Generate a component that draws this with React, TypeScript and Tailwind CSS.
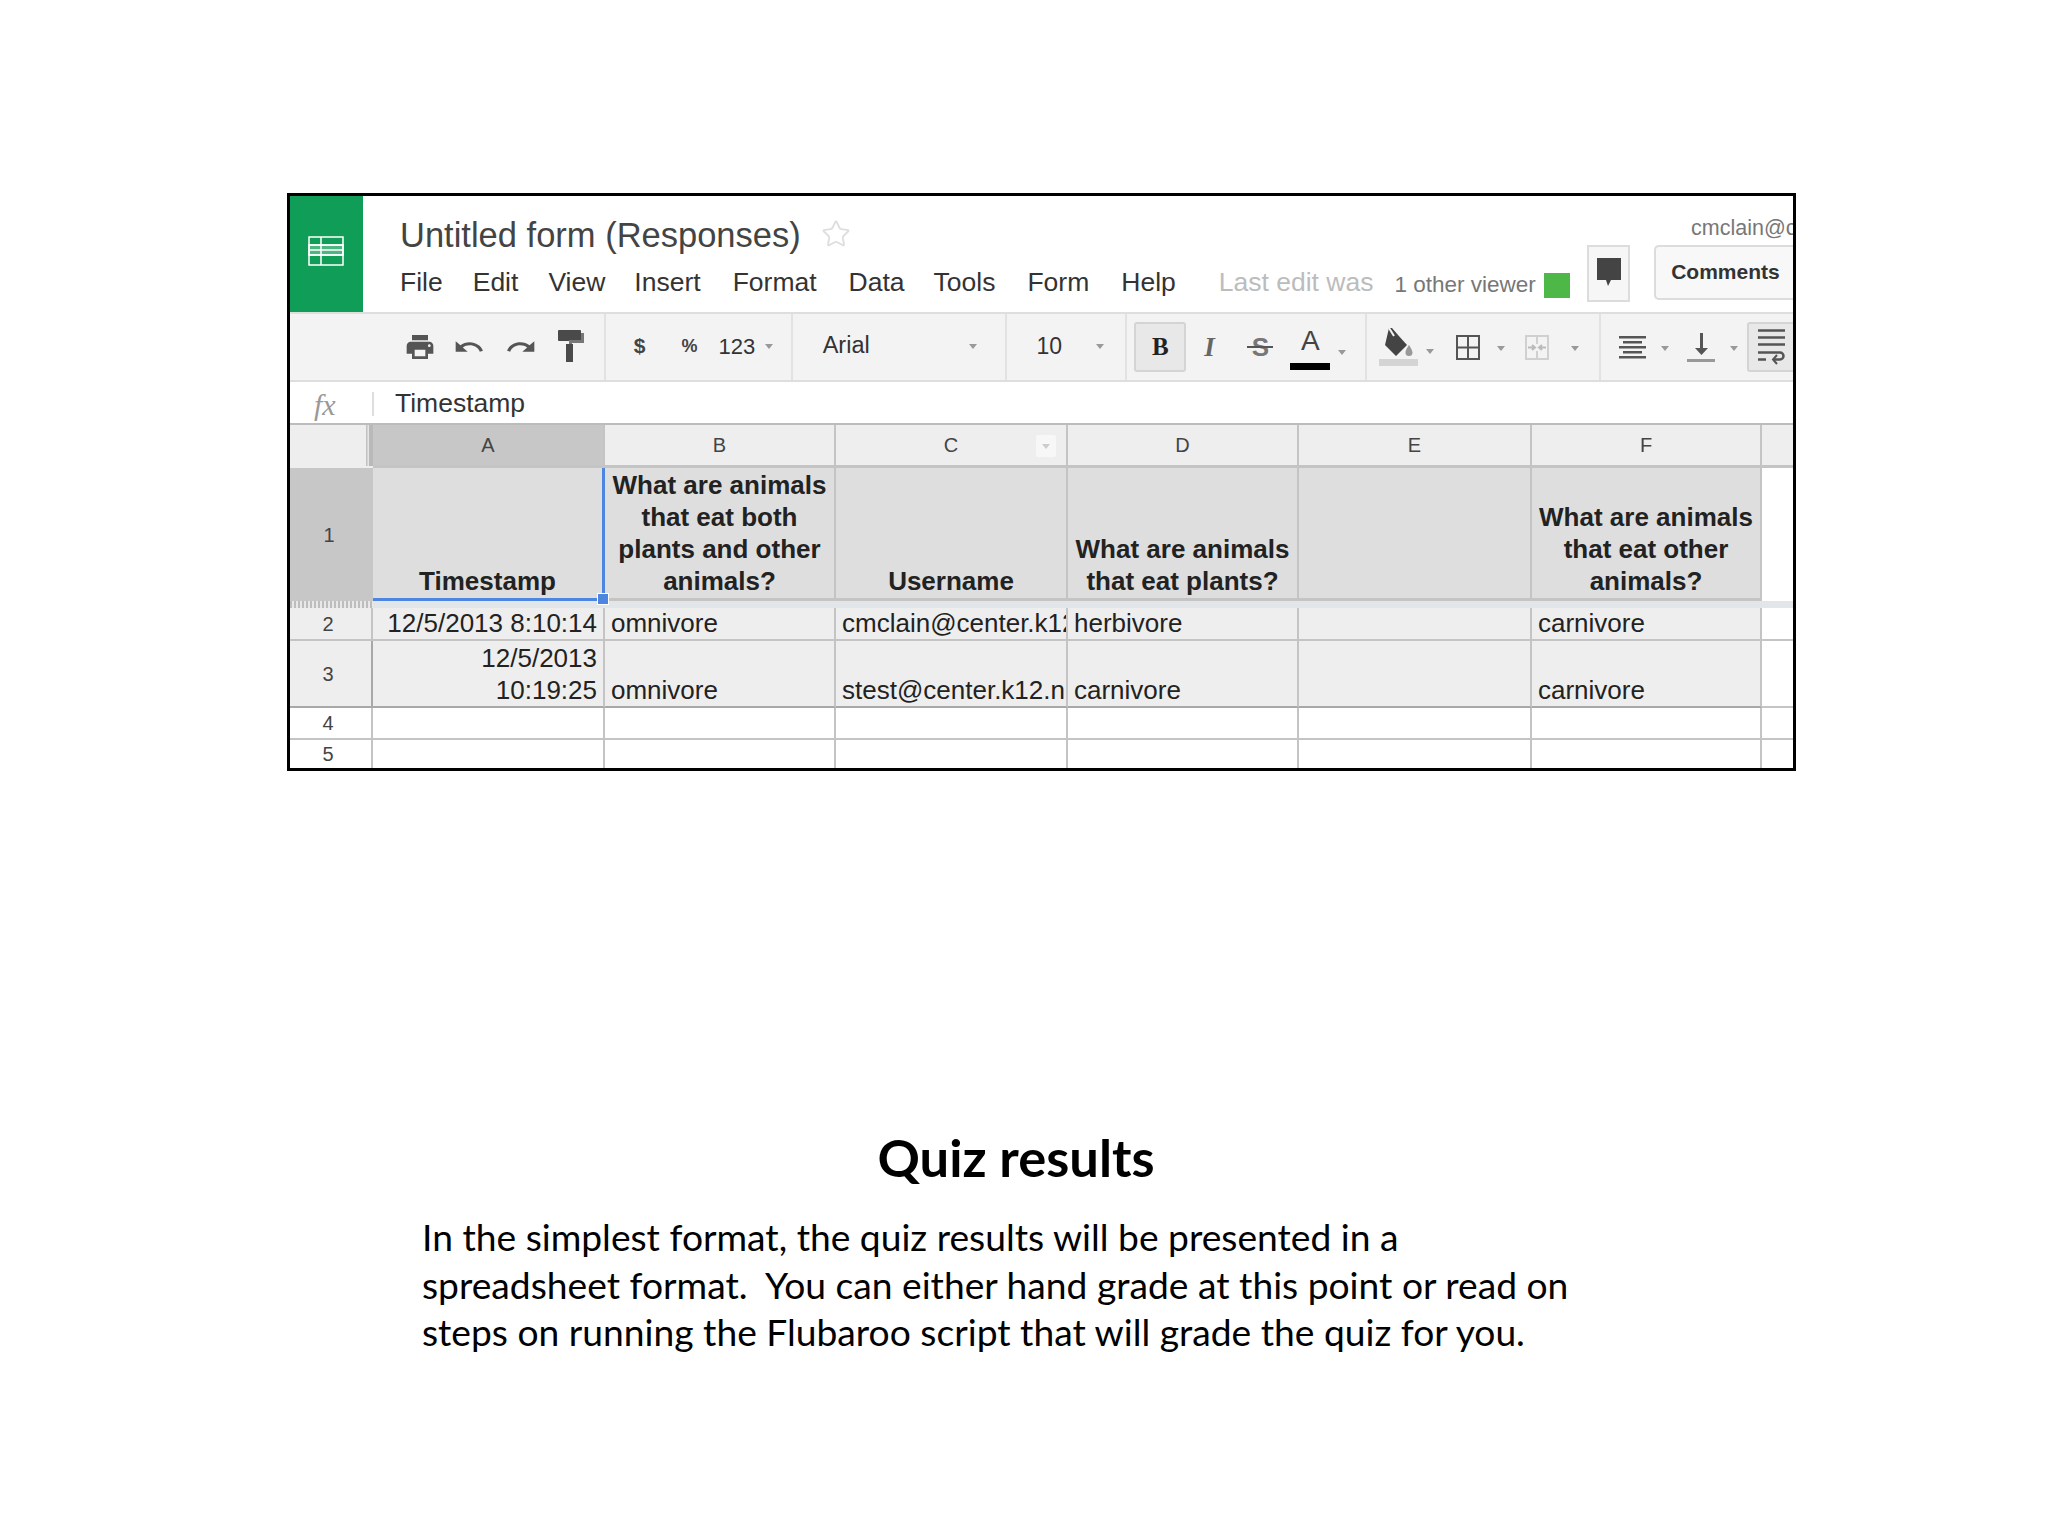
import React from "react"
import { Star } from "lucide-react"

const Caret = ({ className = "" }: { className?: string }) => (
  <span className={`inline-block w-0 h-0 border-x-[4px] border-x-transparent border-t-[5px] border-t-[#999] ${className}`} />
)

const Icon = ({ d, w, h, className = "" }: { d: string; w: number; h: number; className?: string }) => (
  <svg width={w} height={h} viewBox="0 0 24 24" preserveAspectRatio="none" className={className} fill="#555">
    <path d={d} />
  </svg>
)

const PaintRoller = () => (
  <svg width="28" height="32" viewBox="0 0 28 32" fill="#4a4a4a">
    <rect x="1" y="0" width="23" height="11" rx="1" />
    <path d="M24 3h3v10H15v3h-3v-6h12z" fill="#777" />
    <rect x="9" y="14" width="7" height="18" />
  </svg>
)

const FillBucket = () => (
  <svg width="40" height="38" viewBox="0 0 40 38">
    <path d="M10 0l3 0 6 7 9 10-11 11L6 17z" fill="#444" />
    <path d="M10 0l5 8" stroke="#f3f3f3" strokeWidth="2" />
    <path d="M30 17s-3.500 5-3.500 7.500a3.500 3.500 0 0 0 7 0C33.500 22 30 17 30 17z" fill="#999" />
    <rect x="0" y="31" width="39" height="7" fill="#d4d4d4" />
  </svg>
)

const BordersIcon = () => (
  <svg width="24" height="25" viewBox="0 0 24 25" fill="none" stroke="#555" strokeWidth="2">
    <rect x="1" y="1" width="22" height="23" />
    <path d="M12 1v23M1 12.500h22" />
  </svg>
)

const MergeIcon = () => (
  <svg width="24" height="25" viewBox="0 0 24 25" fill="none" stroke="#d0d0d0" strokeWidth="2">
    <rect x="1" y="1" width="22" height="23" />
    <path d="M12 1v8M12 16v8" />
    <path d="M3 12.500h6M21 12.500h-6M7 10l3 2.500-3 2.500M17 10l-3 2.500 3 2.500" stroke="#bbb" />
  </svg>
)

const AlignIcon = () => (
  <svg width="27" height="23" viewBox="0 0 27 23" fill="#555">
    <rect x="0" y="0" width="27" height="2.500" />
    <rect x="4" y="5" width="19" height="2.500" />
    <rect x="0" y="10" width="27" height="2.500" />
    <rect x="4" y="15" width="19" height="2.500" />
    <rect x="0" y="20" width="27" height="2.500" />
  </svg>
)

const ValignIcon = () => (
  <svg width="28" height="29" viewBox="0 0 28 29" fill="#555">
    <rect x="13" y="0" width="3" height="18" />
    <path d="M8 15h13l-6.500 7z" />
    <rect x="0" y="26" width="28" height="3" fill="#999" />
  </svg>
)

const WrapIcon = () => (
  <svg width="27" height="36" viewBox="0 0 27 36" fill="none" stroke="#555" strokeWidth="2.500">
    <path d="M0 1.500h27M0 8.500h27M0 15.500h27" />
    <path d="M0 23.500h22a3.500 3.500 0 0 1 0 7h-6" />
    <path d="M19 26l-4 4.500 4 4.500" strokeWidth="2" />
    <path d="M0 30.500h8" />
  </svg>
)

const undo = "M12.500 8c-2.650 0-5.050.990-6.900 2.600L2 7v9h9l-3.620-3.620c1.390-1.160 3.160-1.880 5.120-1.880 3.540 0 6.550 2.310 7.600 5.500l2.370-.780C21.080 11.030 17.150 8 12.500 8z"
const printer = "M19 8H5c-1.660 0-3 1.340-3 3v6h4v4h12v-4h4v-6c0-1.660-1.340-3-3-3zm-3 11H8v-5h8v5zm3-7c-.550 0-1-.450-1-1s.450-1 1-1 1 .450 1 1-.450 1-1 1zm-1-9H6v4h12V3z"

const Toolbar = () => (
  <div className="flex shrink-0 h-[70px] bg-[#f3f3f3] border-y-2 border-[#dedede] text-[#333]">
    <div className="w-[316px] flex items-center pl-[116px] border-r-2 border-[#e2e2e2]">
      <Icon d={printer} w={32} h={32} className="-ml-[2px]" />
      <Icon d={undo} w={32} h={28} className="ml-[17px]" />
      <Icon d={undo} w={32} h={28} className="ml-[20px] -scale-x-100" />
      <span className="ml-[20px] -mt-[2px]"><PaintRoller /></span>
    </div>
    <div className="w-[187px] flex items-center pb-[2px] border-r-2 border-[#e2e2e2] text-[22px]">
      <span className="ml-[28px] font-bold text-[21px] text-[#444]">$</span>
      <span className="ml-[36px] font-bold text-[18px] text-[#444]">%</span>
      <span className="ml-[21px]">123</span>
      <Caret className="ml-[10px]" />
    </div>
    <div className="w-[214px] flex items-center pb-[2px] border-r-2 border-[#e2e2e2] text-[23.500px]">
      <span className="ml-[30px] w-[146px]">Arial</span>
      <Caret />
    </div>
    <div className="w-[121px] flex items-center pb-[2px] border-r-2 border-[#e2e2e2] text-[23px]">
      <span className="ml-[30px] w-[59px]">10</span>
      <Caret />
    </div>
    <div className="w-[240px] flex items-center border-r-2 border-[#e2e2e2]">
      <span className="ml-[7px] w-[52px] h-[50px] flex items-center justify-center rounded-[3px] border-2 border-[#d4d4d4] bg-[#e8e8e8] font-['Liberation_Serif',serif] font-bold text-[25px] text-[#222]">B</span>
      <span className="ml-[14px] w-[18px] text-center font-['Liberation_Serif',serif] italic font-bold text-[27px] text-[#666]">I</span>
      <span className="relative ml-[29px] w-[26px] text-center text-[26px] font-bold text-[#777]">
        S
        <span className="absolute left-0 right-0 top-[18px] h-[2px] bg-[#555]" />
      </span>
      <span className="relative ml-[17px] w-[40px] h-[46px] text-center text-[28px] leading-[34px] text-[#444]">
        A
        <span className="absolute left-0 right-0 bottom-0 h-[7px] bg-black" />
      </span>
      <Caret className="ml-[8px] mt-[10px]" />
    </div>
    <div className="w-[234px] flex items-center border-r-2 border-[#e2e2e2]">
      <span className="ml-[12px]"><FillBucket /></span>
      <Caret className="ml-[7px] mt-[8px]" />
      <span className="ml-[22px]"><BordersIcon /></span>
      <Caret className="ml-[17px] mt-[2px]" />
      <span className="ml-[20px]"><MergeIcon /></span>
      <Caret className="ml-[22px] mt-[2px]" />
    </div>
    <div className="flex-1 flex items-center">
      <span className="ml-[18px]"><AlignIcon /></span>
      <Caret className="ml-[15px] mt-[2px]" />
      <span className="ml-[18px]"><ValignIcon /></span>
      <Caret className="ml-[15px] mt-[2px]" />
      <span className="ml-[9px] w-[46px] h-[50px] flex items-center justify-center rounded-l-[3px] border-2 border-r-0 border-[#d4d4d4] bg-[#e8e8e8]"><WrapIcon /></span>
    </div>
  </div>
)

const Header = () => (
  <div className="flex shrink-0 h-[116px] bg-white">
    <div className="w-[73px] flex items-center justify-center pb-[6px] pr-[2px] bg-[#109d58]">
      <svg width="36" height="30" viewBox="0 0 36 30" fill="none" stroke="#fff" strokeWidth="1.500">
        <rect x="1" y="1" width="34" height="28" />
        <rect x="1" y="9" width="34" height="10" fill="#fff" fillOpacity="0.25" />
        <path d="M1 9h34M1 14h34M1 19h34M13 1v28" />
      </svg>
    </div>
    <div className="w-[1224px] pl-[37px] pt-[8px]">
      <div className="flex items-center h-[64px] text-[34.500px] text-[#444]">
        Untitled form (Responses)
        <Star size={30} strokeWidth={1.500} className="ml-[20px] -mt-[4px] text-[#dedede] fill-white" />
      </div>
      <div className="flex items-center h-[30px] text-[26.500px] text-[#333]">
        <span>File</span>
        <span className="ml-[30px]">Edit</span>
        <span className="ml-[30px]">View</span>
        <span className="ml-[29px]">Insert</span>
        <span className="ml-[32px]">Format</span>
        <span className="ml-[32px]">Data</span>
        <span className="ml-[29px]">Tools</span>
        <span className="ml-[32px]">Form</span>
        <span className="ml-[32px]">Help</span>
        <span className="ml-[43px] text-[#bcbcbc]">Last edit was</span>
        <span className="ml-[21px] mt-[3px] text-[22.500px] text-[#777]">1 other viewer</span>
        <span className="ml-[8px] mt-[5px] w-[26px] h-[25px] bg-[#4db848]" />
      </div>
    </div>
    <div className="flex-1 overflow-hidden">
      <div className="h-[49px] pt-[20px] pl-[104px] text-[21.500px] leading-[24px] text-[#777] whitespace-nowrap">cmclain@center.k12.nm.us</div>
      <div className="flex">
        <div className="w-[50px] h-[57px] flex items-center justify-center border-2 border-[#dcdcdc] bg-[#f6f6f6]">
          <svg width="26" height="34" viewBox="0 0 26 34" fill="#444">
            <path d="M1 1h24v22H15l-3 6-2-6H1z" />
          </svg>
        </div>
        <div className="ml-[24px] w-[160px] h-[55px] flex items-center pl-[15px] pb-[2px] rounded-l-[5px] border-2 border-r-0 border-[#dcdcdc] bg-[#f8f8f8] text-[21px] font-bold text-[#333]">Comments</div>
      </div>
    </div>
  </div>
)

const colLabels = ["A", "B", "C", "D", "E", "F"]
const vline = "border-r-2 border-[#c4c4c4]"

const Cell = ({ children, right, dark }: { children?: React.ReactNode; right?: boolean; dark?: boolean }) => (
  <div
    className={`flex items-end overflow-hidden whitespace-nowrap leading-[32px] bg-[#eeeeee] border-b-2 ${vline} ${dark ? "border-b-[#a8a8a8]" : ""} ${
      right ? "justify-end text-right pr-[6px]" : "pl-[6px]"
    }`}
  >
    <span>{children}</span>
  </div>
)

const Sheet = () => (
  <div className="grid grid-cols-[83px_232px_231px_232px_231px_233px_230px_1fr] grid-rows-[43px_133px_7px_33px_67px_32px_1fr] flex-1 min-h-0 text-[26px] text-[#222] border-t-2 border-[#bcbcbc]">
    {/* column letters */}
    <div className="border-b-2 border-[#eeeeee] bg-[linear-gradient(90deg,#eeeeee_76px,#b9b9b9_76px,#eeeeee_79px,#b9b9b9_79px)]" />
    {colLabels.map((c, i) => (
      <div
        key={c}
        className={`relative flex items-center justify-center text-[20px] text-[#444] border-b-[3px] border-[#9e9e9e] ${vline} ${i === 0 ? "bg-[#c7c7c7]" : "bg-[#eeeeee]"}`}
      >
        {c}
        {c === "C" && (
          <span className="absolute right-[10px] top-[10px] w-[20px] h-[22px] flex items-center justify-center bg-[#f7f7f7] rounded-[2px]">
            <Caret className="border-t-[#ccc]" />
          </span>
        )}
      </div>
    ))}
    <div className="bg-[#eeeeee] border-b-[3px] border-[#c4c4c4]" />

    {/* row 1 */}
    <div className="flex items-center justify-center pr-[5px] bg-[#c7c7c7] text-[20px] text-[#444]">1</div>
    <div className="relative flex items-end justify-center pb-[1px] bg-[#dedede] font-bold leading-[32px] border-b-[3px] border-[#4d86e0] border-r-[3px] border-r-[#4d86e0]">
      Timestamp
      <span className="absolute -right-[7px] -bottom-[7px] z-10 w-[12px] h-[12px] bg-[#4d86e0] border border-white" />
    </div>
    <div className={`flex items-end justify-center text-center font-bold leading-[32px] pb-[1px] bg-[#dedede] border-b-[3px] border-[#b4b4b4] ${vline}`}>
      <span>What are animals<br />that eat both<br />plants and other<br />animals?</span>
    </div>
    <div className={`flex items-end justify-center font-bold leading-[32px] pb-[1px] bg-[#dedede] border-b-[3px] border-[#b4b4b4] ${vline}`}>Username</div>
    <div className={`flex items-end justify-center text-center font-bold leading-[32px] pb-[1px] bg-[#dedede] border-b-[3px] border-[#b4b4b4] ${vline}`}>
      <span>What are animals<br />that eat plants?</span>
    </div>
    <div className={`bg-[#dedede] border-b-[3px] border-[#b4b4b4] ${vline}`} />
    <div className={`flex items-end justify-center text-center font-bold leading-[32px] pb-[1px] bg-[#dedede] border-b-[3px] border-[#b4b4b4] ${vline}`}>
      <span>What are animals<br />that eat other<br />animals?</span>
    </div>
    <div className="bg-white" />

    {/* frozen divider */}
    <div className="bg-[repeating-linear-gradient(90deg,#bdbdbd_0_2px,#e8e8e8_2px_4px)]" />
    <div className="col-span-7 bg-[#e2e6e9]" />

    {/* row 2 */}
    <div className="flex items-center justify-center pr-[5px] bg-[#eeeeee] text-[20px] text-[#444] border-b-2 border-r-2 border-[#c4c4c4]">2</div>
    <Cell right>12/5/2013 8:10:14</Cell>
    <Cell>omnivore</Cell>
    <Cell>cmclain@center.k12.nm.us</Cell>
    <Cell>herbivore</Cell>
    <Cell />
    <Cell>carnivore</Cell>
    <div className="bg-white border-b-2 border-[#c4c4c4]" />

    {/* row 3 */}
    <div className="flex items-center justify-center pr-[5px] bg-[#eeeeee] text-[20px] text-[#444] border-b-2 border-r-2 border-[#a8a8a8]">3</div>
    <Cell right dark>12/5/2013<br />10:19:25</Cell>
    <Cell dark>omnivore</Cell>
    <Cell dark>stest@center.k12.nm.us</Cell>
    <Cell dark>carnivore</Cell>
    <Cell dark />
    <Cell dark>carnivore</Cell>
    <div className="bg-white border-b-2 border-[#c4c4c4]" />

    {/* empty rows */}
    {["4", "5"].map((n) => (
      <React.Fragment key={n}>
        <div className={`flex items-center justify-center pr-[5px] bg-white text-[20px] leading-none text-[#444] ${vline} ${n === "4" ? "border-b-2" : ""}`}>{n}</div>
        {colLabels.map((c) => (
          <div key={c} className={`bg-white ${vline} ${n === "4" ? "border-b-2" : ""}`} />
        ))}
        <div className={`bg-white border-[#c4c4c4] ${n === "4" ? "border-b-2" : ""}`} />
      </React.Fragment>
    ))}
  </div>
)

export default function App() {
  return (
    <div className="min-h-[1536px] bg-white pt-[193px] font-['Liberation_Sans',Arial,sans-serif]">
      <div className="ml-[287px] w-[1509px] h-[578px] flex flex-col border-[3px] border-black overflow-hidden">
        <Header />
        <Toolbar />
        <div className="flex shrink-0 items-center h-[41px] pt-[3px] bg-white">
          <span className="ml-[24px] w-[58px] font-['Liberation_Serif',serif] italic text-[30px] text-[#999]">fx</span>
          <span className="w-[2px] h-[24px] bg-[#ddd]" />
          <span className="ml-[21px] text-[26.500px] text-[#333]">Timestamp</span>
        </div>
        <Sheet />
      </div>
      <div className="ml-[422px] w-[1188px] mt-[354px] font-['Lato',sans-serif] text-black">
        <h1 className="text-center font-bold text-[52.500px] leading-[64px]">Quiz results</h1>
        <p className="mt-[24px] text-[37.200px] leading-[47.700px] whitespace-pre">
          {"In the simplest format, the quiz results will be presented in a\nspreadsheet format.  You can either hand grade at this point or read on\nsteps on running the Flubaroo script that will grade the quiz for you."}
        </p>
      </div>
    </div>
  )
}
